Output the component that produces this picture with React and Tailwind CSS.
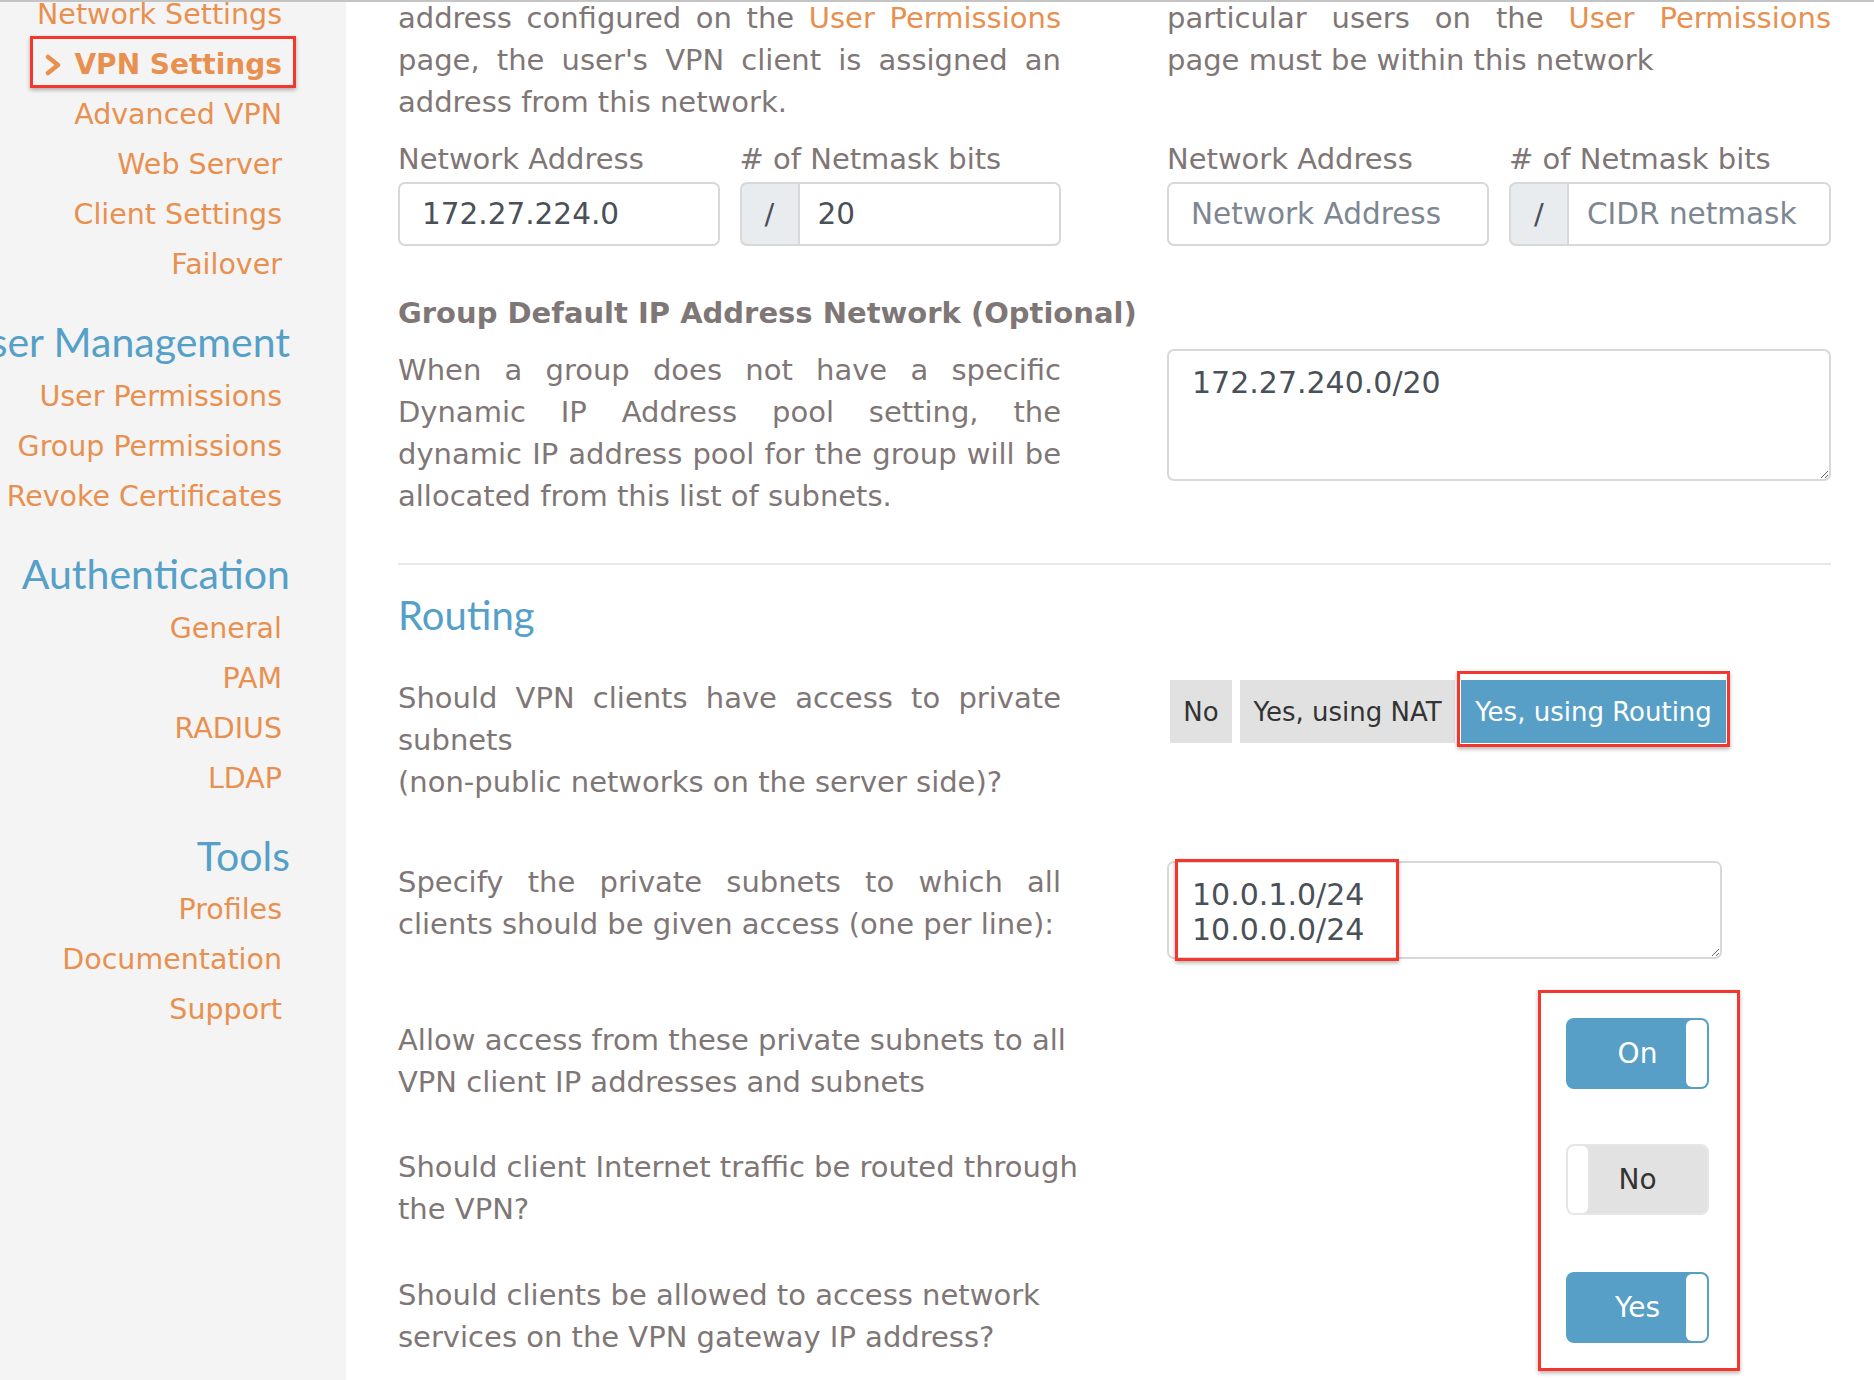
import React from "react";

const J = ({ children }) => (
  <div className="text-justify [text-align-last:justify]">{children}</div>
);
const L = ({ children }) => <div>{children}</div>;
const Link = ({ children }) => <span className="text-[#e8904f]">{children}</span>;

const NavItem = ({ children }) => <div className="whitespace-nowrap">{children}</div>;
const NavHead = ({ children }) => (
  <div className="mt-[27px] mr-[-8px] whitespace-nowrap font-['Lato',sans-serif] text-[41px] text-[#55a0c8]">
    {children}
  </div>
);

const RedBox = ({ className }) => (
  <div
    className={
      "pointer-events-none absolute border-[3px] border-[#f4372c] shadow-[0_2px_4px_rgba(0,0,0,0.3)] " +
      className
    }
  />
);

function Field({ label, value, placeholder }) {
  return (
    <div>
      <div className="leading-[42px]">{label}</div>
      <input
        readOnly
        value={value || ""}
        placeholder={placeholder}
        className="mt-[2px] h-[64px] w-full rounded-[7px] border-2 border-[#d8d8d8] bg-white px-[22px] text-[29.5px] text-[#495057] outline-none placeholder:text-[#7d8791]"
      />
    </div>
  );
}

function MaskField({ value, placeholder }) {
  return (
    <div>
      <div className="leading-[42px]"># of Netmask bits</div>
      <div className="mt-[2px] flex h-[64px]">
        <div className="flex w-[58px] items-center justify-center rounded-l-[7px] border-2 border-r-0 border-[#d8d8d8] bg-[#e9ecef] text-[#495057]">
          /
        </div>
        <input
          readOnly
          value={value || ""}
          placeholder={placeholder}
          className="h-full min-w-0 flex-1 rounded-r-[7px] border-2 border-[#d8d8d8] bg-white px-[18px] text-[29.5px] text-[#495057] outline-none placeholder:text-[#7d8791]"
        />
      </div>
    </div>
  );
}

function Toggle({ on, label }) {
  return (
    <div
      className={
        "relative flex h-[71px] w-[143px] items-center justify-center rounded-[8px] text-[28px] " +
        (on ? "bg-[#579fc7] text-white" : "border-2 border-[#e6e6e6] bg-[#e2e2e2] text-[#333]")
      }
    >
      <div
        className={
          "absolute w-[21px] rounded-[6px] bg-white " +
          (on ? "right-[2px] top-[2px] bottom-[2px]" : "left-0 top-0 bottom-0 border-r border-[#e6e6e6]")
        }
      />
      <span>{label}</span>
    </div>
  );
}

export default function App() {
  return (
    <div className="relative flex h-[1380px] w-[1874px] overflow-hidden border-t-2 border-[#c4c4c4] bg-white font-['DejaVu_Sans',sans-serif] text-[29px] leading-[42px] text-[#7f7676]">
      {/* Sidebar */}
      <aside className="flex w-[346px] shrink-0 flex-col items-end bg-[#f4f4f4] pr-[64px] text-[28.5px] leading-[50px] text-[#e8904f]">
        <div className="mt-[-12px]">
          <NavItem>Network Settings</NavItem>
        </div>
        <div className="relative flex items-center font-bold">
          <svg width="18" height="22" viewBox="0 0 18 22" className="mr-[12px]">
            <polyline points="4,3 14,11 4,19" fill="none" stroke="#e8904f" strokeWidth="4.5" strokeLinecap="round" strokeLinejoin="round" />
          </svg>
          <span className="whitespace-nowrap text-[28px]">VPN Settings</span>
          <RedBox className="left-[-14px] right-[-14px] top-[-4px] bottom-[2px]" />
        </div>
        <NavItem>Advanced VPN</NavItem>
        <NavItem>Web Server</NavItem>
        <NavItem>Client Settings</NavItem>
        <NavItem>Failover</NavItem>

        <NavHead>User Management</NavHead>
        <div className="mt-[5px] flex flex-col items-end">
          <NavItem>User Permissions</NavItem>
          <NavItem>Group Permissions</NavItem>
          <NavItem>Revoke Certificates</NavItem>
        </div>

        <NavHead>Authentication</NavHead>
        <div className="mt-[5px] flex flex-col items-end">
          <NavItem>General</NavItem>
          <NavItem>PAM</NavItem>
          <NavItem>RADIUS</NavItem>
          <NavItem>LDAP</NavItem>
        </div>

        <NavHead>Tools</NavHead>
        <div className="mt-[4px] flex flex-col items-end">
          <NavItem>Profiles</NavItem>
          <NavItem>Documentation</NavItem>
          <NavItem>Support</NavItem>
        </div>
      </aside>

      {/* Main */}
      <main className="ml-[52px] mt-[-5px] w-[1433px] shrink-0">
        <div className="grid grid-cols-[663px_664px] gap-x-[106px]">
          <div>
            <J>
              address configured on the <Link>User Permissions</Link>
            </J>
            <J>page, the user's VPN client is assigned an</J>
            <L>address from this network.</L>
          </div>
          <div>
            <J>
              particular users on the <Link>User Permissions</Link>
            </J>
            <L>page must be within this network</L>
          </div>
          <div className="mt-[15px] grid grid-cols-2 gap-x-[20px]">
            <Field label="Network Address" value="172.27.224.0" />
            <MaskField value="20" />
          </div>
          <div className="mt-[15px] grid grid-cols-2 gap-x-[20px]">
            <Field label="Network Address" placeholder="Network Address" />
            <MaskField placeholder="CIDR netmask" />
          </div>
        </div>

        <div className="mt-[46px] whitespace-nowrap font-bold text-[29px]">
          Group Default IP Address Network (Optional)
        </div>

        <div className="mt-[15px] grid grid-cols-[663px_664px] gap-x-[106px]">
          <div>
            <J>When a group does not have a specific</J>
            <J>Dynamic IP Address pool setting, the</J>
            <J>dynamic IP address pool for the group will be</J>
            <L>allocated from this list of subnets.</L>
          </div>
          <textarea
            readOnly
            defaultValue="172.27.240.0/20"
            className="h-[132px] w-full rounded-[7px] border-2 border-[#d8d8d8] bg-white px-[23px] py-[14px] text-[30px] leading-[35px] text-[#495057] outline-none"
          />
        </div>

        <div className="mt-[46px] h-[2px] bg-[#e8e8e8]" />

        <h2 className="mt-[26px] font-['Lato',sans-serif] text-[40px] leading-[48px] text-[#55a0c8]">
          Routing
        </h2>

        {/* Row 1 */}
        <div className="mt-[38px] flex">
          <div className="w-[663px] shrink-0">
            <J>Should VPN clients have access to private</J>
            <L>subnets</L>
            <L>(non-public networks on the server side)?</L>
          </div>
          <div className="ml-[109px] mt-[3px] flex h-[63px] text-[26px]">
            <div className="flex w-[62px] items-center justify-center bg-[#e1e1e1] text-[#333]">No</div>
            <div className="ml-[8px] flex w-[215px] items-center justify-center bg-[#e1e1e1] text-[#333]">
              Yes, using NAT
            </div>
            <div className="relative ml-[6px] flex w-[265px] items-center justify-center bg-[#579fc7] text-white">
              Yes, using Routing
              <RedBox className="left-[-4px] right-[-4px] top-[-9px] bottom-[-4px]" />
            </div>
          </div>
        </div>

        {/* Row 2 */}
        <div className="mt-[58px] flex">
          <div className="w-[663px] shrink-0">
            <J>Specify the private subnets to which all</J>
            <L>clients should be given access (one per line):</L>
          </div>
          <div className="relative ml-[106px] h-[98px] w-[555px] shrink-0">
            <textarea
              readOnly
              defaultValue={"10.0.1.0/24\n10.0.0.0/24"}
              className="h-full w-full rounded-[7px] border-2 border-[#d8d8d8] bg-white px-[23px] py-[14px] text-[30px] leading-[35px] text-[#495057] outline-none"
            />
            <RedBox className="left-[8px] top-[-2px] h-[102px] w-[224px]" />
          </div>
        </div>

        {/* Toggle rows */}
        <div className="relative mt-[60px]">
          <div className="flex">
            <div className="w-[700px] shrink-0">
              <L>Allow access from these private subnets to all</L>
              <L>VPN client IP addresses and subnets</L>
            </div>
            <div className="ml-[468px] mt-[-1px]">
              <Toggle on label="On" />
            </div>
          </div>
          <div className="mt-[43px] flex">
            <div className="w-[700px] shrink-0">
              <L>Should client Internet traffic be routed through</L>
              <L>the VPN?</L>
            </div>
            <div className="ml-[468px] mt-[-2px]">
              <Toggle label="No" />
            </div>
          </div>
          <div className="mt-[44px] flex">
            <div className="w-[700px] shrink-0">
              <L>Should clients be allowed to access network</L>
              <L>services on the VPN gateway IP address?</L>
            </div>
            <div className="ml-[468px] mt-[-2px]">
              <Toggle on label="Yes" />
            </div>
          </div>
          <RedBox className="left-[1140px] top-[-29px] h-[381px] w-[202px]" />
        </div>
      </main>
    </div>
  );
}
